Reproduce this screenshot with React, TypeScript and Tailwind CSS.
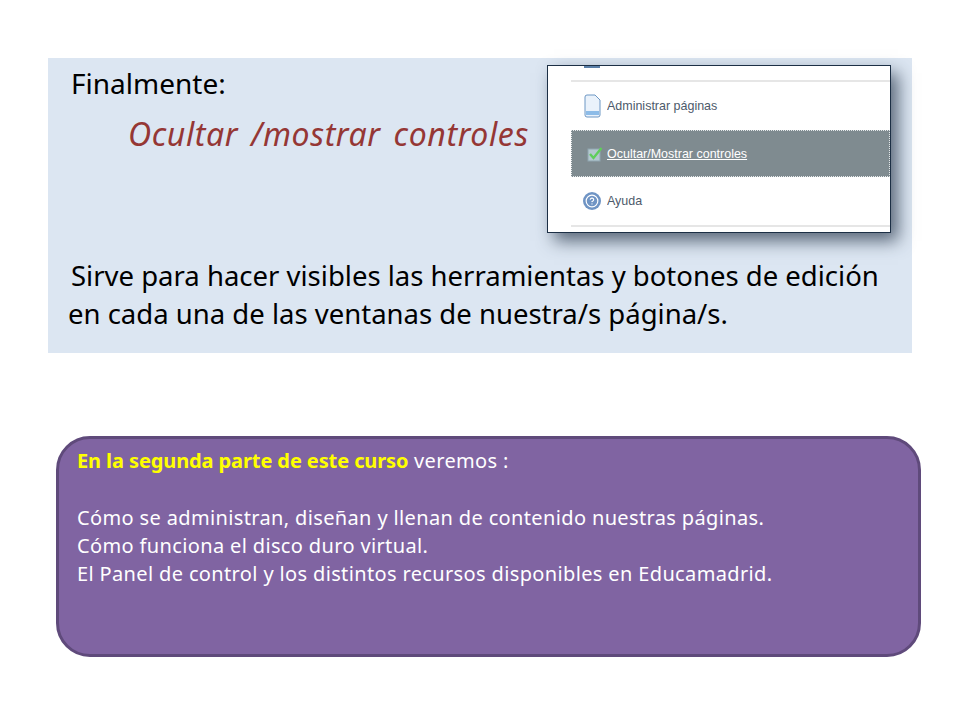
import { HelpCircle } from 'lucide-react';

const MenuCapture = () => {
    return (
        <div className="w-[344px] h-[168px] border border-[#1c2f45] bg-white shadow-[7px_8px_16px_rgba(40,55,75,0.72)] overflow-hidden font-['Liberation_Sans',sans-serif] flex flex-col shrink-0">
            <div className="ml-[23px] h-[16px] border-b-2 border-[#e6e6e6] relative">
                <div className="absolute left-[13px] top-0 w-[16px] h-[2px] bg-[#5a7fa8]" />
            </div>
            <div className="ml-[23px] h-[48px] flex items-center pl-[13px] gap-[6px]">
                <svg width="17" height="24" viewBox="0 0 17 24">
                    <path d="M1 3 a2 2 0 0 1 2-2 h8 l5 5 v15 a2 2 0 0 1-2 2 h-11 a2 2 0 0 1-2-2z" fill="#eaf2fb" stroke="#6d97c4" />
                    <rect x="2" y="17" width="13" height="4" fill="#8dbce8" />
                </svg>
                <span className="text-[13px] text-[#4d5a6b] scale-x-[0.96] origin-left whitespace-nowrap">Administrar páginas</span>
            </div>
            <div className="ml-[23px] h-[47px] bg-[#7f8b90] border border-dotted border-[#e4e8ea] flex items-center pl-[15px] gap-[4px]">
                <svg width="16" height="16" viewBox="0 0 16 16">
                    <rect x="1" y="3" width="12" height="12" fill="#b4c8cf" stroke="#8fa6b0" />
                    <path d="M3 8 l3.5 4 l8-10" fill="none" stroke="#5fce5a" strokeWidth="2.4" />
                </svg>
                <span className="text-[13px] text-white underline scale-x-[0.96] origin-left whitespace-nowrap">Ocultar/Mostrar controles</span>
            </div>
            <div className="ml-[23px] h-[50px] border-b-2 border-[#e6e6e6] flex items-center pl-[12px] gap-[6px]">
                <div className="w-[18px] h-[18px] rounded-full bg-[#6f94c4] flex items-center justify-center">
                    <HelpCircle className="w-[14px] h-[14px] text-white" />
                </div>
                <span className="text-[13px] text-[#4d5a6b] scale-x-[0.96] origin-left">Ayuda</span>
            </div>
        </div>
    );
};

export default function App() {
    return (
        <div className="w-[960px] h-[720px] bg-white font-['Noto_Sans',sans-serif] pt-[58px] pl-[48px] flex flex-col">
            <section className="w-[864px] h-[295px] bg-[#dce6f2] flex flex-col">
                <div className="flex pt-[7px] pl-[23px]">
                    <div className="w-[476px] shrink-0">
                        <p className="text-[28px] leading-[36px] text-black">Finalmente:</p>
                        <p className="text-[32px] leading-[38px] tracking-[0.6px] [word-spacing:4px] mt-[14px] ml-[57px] italic text-[#953735] whitespace-nowrap">Ocultar /mostrar controles</p>
                    </div>
                    <MenuCapture />
                </div>
                <div className="mt-[24px] text-[27.5px] leading-[38px] text-black whitespace-nowrap">
                    <p className="ml-[23px]">Sirve para hacer visibles las herramientas y botones de edición</p>
                    <p className="ml-[20px]">en cada una de las ventanas de nuestra/s página/s.</p>
                </div>
            </section>
            <section className="mt-[83px] ml-[8px] w-[865px] h-[221px] bg-[#8064a2] border-[3px] border-[#5f4a7b] rounded-[34px] pl-[18px] pt-[8px] text-[20px] leading-[28px] tracking-[0.36px] text-white whitespace-nowrap">
                <p><span className="font-bold tracking-[-0.1px] text-[#ffff00]">En la segunda parte de este curso</span> veremos :</p>
                <p className="mt-[29px]">Cómo se administran, diseñan y llenan de contenido nuestras páginas.</p>
                <p>Cómo funciona el disco duro virtual.</p>
                <p>El Panel de control y los distintos recursos disponibles en Educamadrid.</p>
            </section>
        </div>
    );
}
